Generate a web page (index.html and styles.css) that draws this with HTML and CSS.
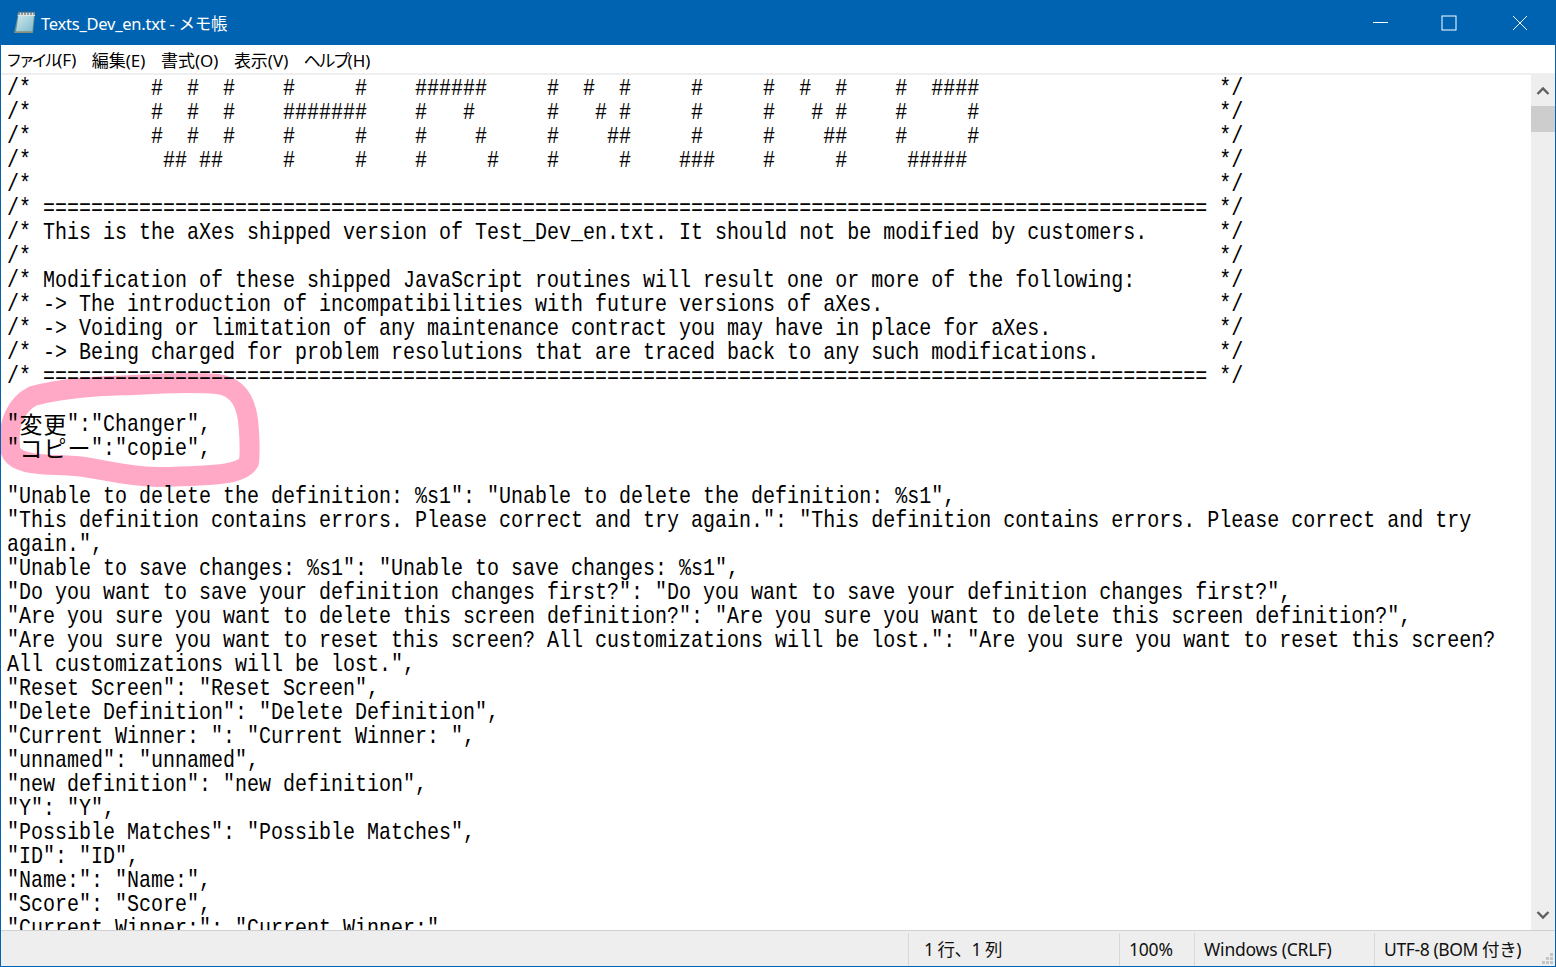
FILE: index.html
```html
<!DOCTYPE html>
<html lang="ja">
<head>
<meta charset="utf-8">
<title>Texts_Dev_en.txt - メモ帳</title>
<link rel="stylesheet" href="styles.css">
</head>
<body>
<div class="window">
  <header class="titlebar">
    <svg class="app-icon" width="24" height="24" viewBox="0 0 24 24" aria-hidden="true">
      <defs>
        <linearGradient id="page" x1="0" y1="0" x2="1" y2="1">
          <stop offset="0" stop-color="#cfeaf0"/>
          <stop offset="1" stop-color="#7fb9c9"/>
        </linearGradient>
      </defs>
      <path d="M5 4 H22 L20 23 H1 Z" fill="#6d8c8c"/>
      <path d="M5.5 5 H21 L19.3 21.5 H3 Z" fill="url(#page)"/>
      <path d="M5 2.5 H22 V6 H4.7 Z" fill="#dfe6e6"/>
      <path d="M6 1 V5 M9 1 V5 M12 1 V5 M15 1 V5 M18 1 V5 M21 1 V5" stroke="#59686c" stroke-width="1.2"/>
      <path d="M3 21.5 H19.3 L19 23 H1.5 Z" fill="#8a8f78"/>
    </svg>
    <span class="title">Texts_Dev_en.txt - メモ帳</span>
    <div class="controls">
      <span class="control min">
        <svg width="15" height="16" viewBox="0 0 15 16" aria-hidden="true"><path d="M0 7.5 H15" stroke="#fff" fill="none"/></svg>
      </span>
      <span class="control">
        <svg width="16" height="16" viewBox="0 0 16 16" aria-hidden="true"><rect x="1" y="1" width="14" height="14" stroke="#fff" fill="none"/></svg>
      </span>
      <span class="control">
        <svg width="16" height="16" viewBox="0 0 16 16" aria-hidden="true"><path d="M1 1 L15 15 M15 1 L1 15" stroke="#fff" fill="none"/></svg>
      </span>
    </div>
  </header>
  <nav class="menubar">
    <span><span class="kana-tight">ファイル</span>(F)</span>
    <span>編集(E)</span>
    <span>書式(O)</span>
    <span>表示(V)</span>
    <span><span class="kana">ヘルプ</span>(H)</span>
  </nav>
  <main class="body">
    <div class="editor">
      <svg class="marker" width="270" height="120" viewBox="0 370 270 120" aria-hidden="true">
        <path d="M10 445 C8 425 15 405 33 396 C70 386 110 386 133 385 C165 383 195 382 217 384 C235 386 245 398 248 420 C250 440 250 452 249 462 C243 473 225 476 157 477 C120 476 100 468 75 466 C50 464 25 466 14 456 C10 452 10 450 10 445 Z" fill="none" stroke="#ffa9c6" stroke-width="20" stroke-linejoin="round"/>
      </svg>
      <pre class="text">/*          #  #  #    #     #    ######     #  #  #     #     #  #  #    #  ####                    */
/*          #  #  #    #######    #   #      #   # #     #     #   # #    #     #                    */
/*          #  #  #    #     #    #    #     #    ##     #     #    ##    #     #                    */
/*           ## ##     #     #    #     #    #     #    ###    #     #     #####                     */
/*                                                                                                   */
/* ================================================================================================= */
/* This is the aXes shipped version of Test_Dev_en.txt. It should not be modified by customers.      */
/*                                                                                                   */
/* Modification of these shipped JavaScript routines will result one or more of the following:       */
/* -> The introduction of incompatibilities with future versions of aXes.                            */
/* -> Voiding or limitation of any maintenance contract you may have in place for aXes.              */
/* -> Being charged for problem resolutions that are traced back to any such modifications.          */
/* ================================================================================================= */

"<span class="cjk two">変更</span>":"Changer",
"<span class="cjk three">コピー</span>":"copie",

"Unable to delete the definition: %s1": "Unable to delete the definition: %s1",
"This definition contains errors. Please correct and try again.": "This definition contains errors. Please correct and try
again.",
"Unable to save changes: %s1": "Unable to save changes: %s1",
"Do you want to save your definition changes first?": "Do you want to save your definition changes first?",
"Are you sure you want to delete this screen definition?": "Are you sure you want to delete this screen definition?",
"Are you sure you want to reset this screen? All customizations will be lost.": "Are you sure you want to reset this screen?
All customizations will be lost.",
"Reset Screen": "Reset Screen",
"Delete Definition": "Delete Definition",
"Current Winner: ": "Current Winner: ",
"unnamed": "unnamed",
"new definition": "new definition",
"Y": "Y",
"Possible Matches": "Possible Matches",
"ID": "ID",
"Name:": "Name:",
"Score": "Score",
"Current Winner:": "Current Winner:"</pre>
    </div>
    <aside class="scrollbar">
      <span class="arrow">
        <svg width="14" height="10" viewBox="0 0 14 10" aria-hidden="true"><path d="M1.5 8 L7 2.5 L12.5 8" stroke="#606060" stroke-width="2.4" fill="none"/></svg>
      </span>
      <span class="thumb"></span>
      <span class="track"></span>
      <span class="arrow">
        <svg width="14" height="10" viewBox="0 0 14 10" aria-hidden="true"><path d="M1.5 2 L7 7.5 L12.5 2" stroke="#606060" stroke-width="2.4" fill="none"/></svg>
      </span>
    </aside>
  </main>
  <footer class="statusbar">
    <span class="cell pos">1 行、1 列</span>
    <span class="cell zoom">100%</span>
    <span class="cell eol">Windows (CRLF)</span>
    <span class="cell enc">UTF-8 (BOM 付き)</span>
    <span class="grip"></span>
  </footer>
</div>
</body>
</html>
```
FILE: styles.css
```css
* { box-sizing: border-box; }
html, body { margin: 0; height: 100%; overflow: hidden; }
body {
  font-family: "Noto Sans", "Noto Sans CJK JP", sans-serif;
  color: #000;
  background: #fff;
}
.window {
  display: flex;
  flex-direction: column;
  width: 1556px;
  height: 967px;
  border: 1px solid #0063b1;
  border-top: 0;
}
.titlebar {
  display: flex;
  align-items: center;
  flex: 0 0 45px;
  background: #0063b1;
  color: #fff;
  padding-left: 12px;
}
.app-icon { flex: none; margin-right: 4px; margin-top: -1px; }
.title { font-size: 16.5px; letter-spacing: -0.24px; }
.controls { display: flex; margin-left: auto; height: 45px; }
.control {
  display: flex;
  align-items: center;
  justify-content: center;
  width: 71px;
  height: 45px;
}
.control.min { width: 66px; }
.menubar {
  display: flex;
  align-items: center;
  flex: 0 0 30px;
  gap: 15.5px;
  padding-left: 5px;
  font-size: 17px;
  letter-spacing: 0;
  background: #fff;
  border-bottom: 2px solid #efefef;
}
.kana-tight { font-size: 16px; letter-spacing: -3.2px; }
.kana { letter-spacing: -2.4px; }
.body { display: flex; flex: 1; min-height: 0; }
.editor {
  position: relative;
  flex: 1;
  min-width: 0;
  overflow: hidden;
  background: #fff;
}
.marker { position: absolute; left: -1px; top: 295px; }
.text {
  position: relative;
  width: 120%;
  margin: 0;
  padding: 2px 0 0 6px;
  font-family: "Liberation Mono", monospace;
  font-size: 24px;
  line-height: 24px;
  color: #000;
  white-space: pre;
  transform: scaleX(0.83333);
  transform-origin: 6px 0;
}
.cjk {
  display: inline-block;
  font-family: "Noto Sans CJK JP", sans-serif;
  font-size: 23px;
  line-height: 24px;
  letter-spacing: 1px;
  vertical-align: top;
  transform: translate(1px, -2px) scaleX(1.2);
  transform-origin: 0 0;
}
.two { width: 57.6px; }
.three { width: 86.4px; }
.scrollbar {
  display: flex;
  flex-direction: column;
  flex: 0 0 24px;
  background: #eee;
}
.arrow {
  display: flex;
  align-items: center;
  justify-content: center;
  flex: 0 0 31px;
}
.thumb { flex: 0 0 26px; background: #cdcdcd; }
.track { flex: 1; }
.statusbar {
  position: relative;
  display: flex;
  align-items: center;
  flex: 0 0 36px;
  background: #eee;
  border-top: 1px solid #d0d0d0;
  font-size: 17.5px;
  letter-spacing: -0.2px;
  color: #111;
  padding-left: 907px;
}
.cell {
  display: flex;
  align-items: center;
  height: 33px;
  padding-left: 9px;
  padding-bottom: 2px;
  margin-top: 2px;
  border-left: 1px solid #d8d8d8;
}
.pos { width: 211px; padding-left: 15px; letter-spacing: -0.5px; }
.zoom { width: 75px; }
.eol { width: 180px; }
.enc { flex: 1; letter-spacing: -0.4px; }
.grip {
  position: absolute;
  right: 1px;
  bottom: 1px;
  width: 12px;
  height: 12px;
  background:
    linear-gradient(#c4c4c4, #c4c4c4) 8px 0 / 3px 3px no-repeat,
    linear-gradient(#c4c4c4, #c4c4c4) 4px 4px / 3px 3px no-repeat,
    linear-gradient(#c4c4c4, #c4c4c4) 8px 4px / 3px 3px no-repeat,
    linear-gradient(#c4c4c4, #c4c4c4) 0 8px / 3px 3px no-repeat,
    linear-gradient(#c4c4c4, #c4c4c4) 4px 8px / 3px 3px no-repeat,
    linear-gradient(#c4c4c4, #c4c4c4) 8px 8px / 3px 3px no-repeat;
}
```
